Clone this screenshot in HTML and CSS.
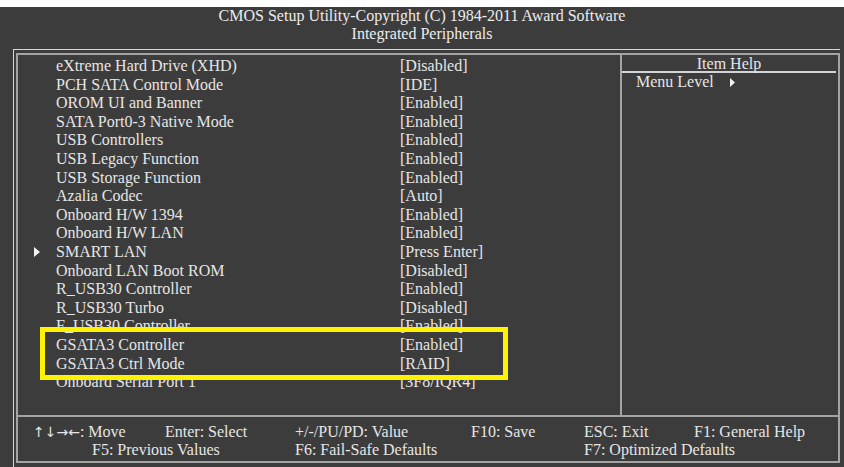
FILE: index.html
```html
<!DOCTYPE html>
<html>
<head>
<meta charset="utf-8">
<link rel="stylesheet" href="styles.css">
</head>
<body>
<div class="screen">
  <div class="title">
    <div>CMOS Setup Utility-Copyright (C) 1984-2011 Award Software</div>
    <div>Integrated Peripherals</div>
  </div>
  <div class="outer">
    <div class="frame">
      <div class="main">
        <div class="list">
          <div class="row"><span class="label">eXtreme Hard Drive (XHD)</span><span class="val">[Disabled]</span></div>
          <div class="row"><span class="label">PCH SATA Control Mode</span><span class="val">[IDE]</span></div>
          <div class="row"><span class="label">OROM UI and Banner</span><span class="val">[Enabled]</span></div>
          <div class="row"><span class="label">SATA Port0-3 Native Mode</span><span class="val">[Enabled]</span></div>
          <div class="row"><span class="label">USB Controllers</span><span class="val">[Enabled]</span></div>
          <div class="row"><span class="label">USB Legacy Function</span><span class="val">[Enabled]</span></div>
          <div class="row"><span class="label">USB Storage Function</span><span class="val">[Enabled]</span></div>
          <div class="row"><span class="label">Azalia Codec</span><span class="val">[Auto]</span></div>
          <div class="row"><span class="label">Onboard H/W 1394</span><span class="val">[Enabled]</span></div>
          <div class="row"><span class="label">Onboard H/W LAN</span><span class="val">[Enabled]</span></div>
          <div class="row"><span class="mark"><svg width="6" height="10" viewBox="0 0 6 10"><polygon points="0,0 6,5 0,10" fill="#f2f2f2"/></svg></span><span class="label">SMART LAN</span><span class="val">[Press Enter]</span></div>
          <div class="row"><span class="label">Onboard LAN Boot ROM</span><span class="val">[Disabled]</span></div>
          <div class="row"><span class="label">R_USB30 Controller</span><span class="val">[Enabled]</span></div>
          <div class="row"><span class="label">R_USB30 Turbo</span><span class="val">[Disabled]</span></div>
          <div class="row"><span class="label">F_USB30 Controller</span><span class="val">[Enabled]</span></div>
          <div class="row"><span class="label">GSATA3 Controller</span><span class="val">[Enabled]</span></div>
          <div class="row"><span class="label">GSATA3 Ctrl Mode</span><span class="val">[RAID]</span></div>
          <div class="row"><span class="label">Onboard Serial Port 1</span><span class="val">[3F8/IQR4]</span></div>
          <div class="highlight"></div>
        </div>
        <div class="help">
          <div class="help-head">Item Help</div>
          <div class="help-line">Menu Level <svg class="lvl" width="5" height="9" viewBox="0 0 5 9"><polygon points="0,0 5,4.5 0,9" fill="#f2f2f2"/></svg></div>
        </div>
      </div>
      <div class="footer">
        <div class="frow r1">
          <span class="w132"><span class="arrows">↑↓→←</span>: Move</span>
          <span class="w130">Enter: Select</span>
          <span class="w176">+/-/PU/PD: Value</span>
          <span class="w113">F10: Save</span>
          <span class="w110">ESC: Exit</span>
          <span>F1: General Help</span>
        </div>
        <div class="frow r2">
          <span class="w203">F5: Previous Values</span>
          <span class="w289">F6: Fail-Safe Defaults</span>
          <span>F7: Optimized Defaults</span>
        </div>
      </div>
    </div>
  </div>
</div>
</body>
</html>
```
FILE: styles.css
```css
html, body {
  margin: 0;
  padding: 0;
  background: #ffffff;
}
body {
  font-family: "Liberation Serif", "Times New Roman", serif;
  font-size: 16px;
  color: #e6e6e6;
}
.screen {
  margin-top: 7px;
  width: 844px;
  height: 460px;
  background: #3c3c3c;
  overflow: hidden;
}
.title {
  height: 42px;
  text-align: center;
  line-height: 18px;
  color: #ececec;
}
.outer {
  margin-left: 13px;
  margin-right: 4px;
  height: 418px;
  border-top: 1px solid #d8d8d8;
  border-left: 1px solid #d8d8d8;
  padding: 3px 0 0 2px;
}
.frame {
  height: 406px;
  border: 2px solid #a4a4a4;
  display: flex;
  flex-direction: column;
}
.main {
  height: 360px;
  display: flex;
  border-bottom: 2px solid #a4a4a4;
}
.list {
  position: relative;
  width: 602px;
  border-right: 2px solid #a4a4a4;
  padding-top: 2px;
}
.row {
  position: relative;
  height: 18.6px;
  line-height: 18.6px;
  white-space: nowrap;
}
.label {
  position: absolute;
  left: 38px;
}
.val {
  position: absolute;
  left: 382px;
}
.mark {
  position: absolute;
  left: 16px;
  top: 4px;
  line-height: 0;
}
.highlight {
  position: absolute;
  left: 22px;
  top: 272px;
  width: 468px;
  height: 53px;
  box-sizing: border-box;
  border: 5px solid #fff200;
}
.help {
  flex: 1;
}
.help-head {
  height: 16px;
  line-height: 17px;
  text-align: center;
  border-bottom: 2px solid #d4d4d4;
  margin-right: 2px;
}
.help-line {
  line-height: 18px;
  padding-left: 14px;
}
.lvl {
  margin-left: 12px;
}
.footer {
  flex: 1;
  padding-top: 6px;
}
.frow {
  display: flex;
  line-height: 18px;
  white-space: nowrap;
}
.arrows {
  font-family: "DejaVu Sans", sans-serif;
  font-size: 14px;
}
.r1 { padding-left: 15px; }
.r2 { padding-left: 74px; }
.w132 { width: 132px; }
.w130 { width: 130px; }
.w176 { width: 176px; }
.w113 { width: 113px; }
.w110 { width: 110px; }
.w203 { width: 203px; }
.w289 { width: 289px; }
```
